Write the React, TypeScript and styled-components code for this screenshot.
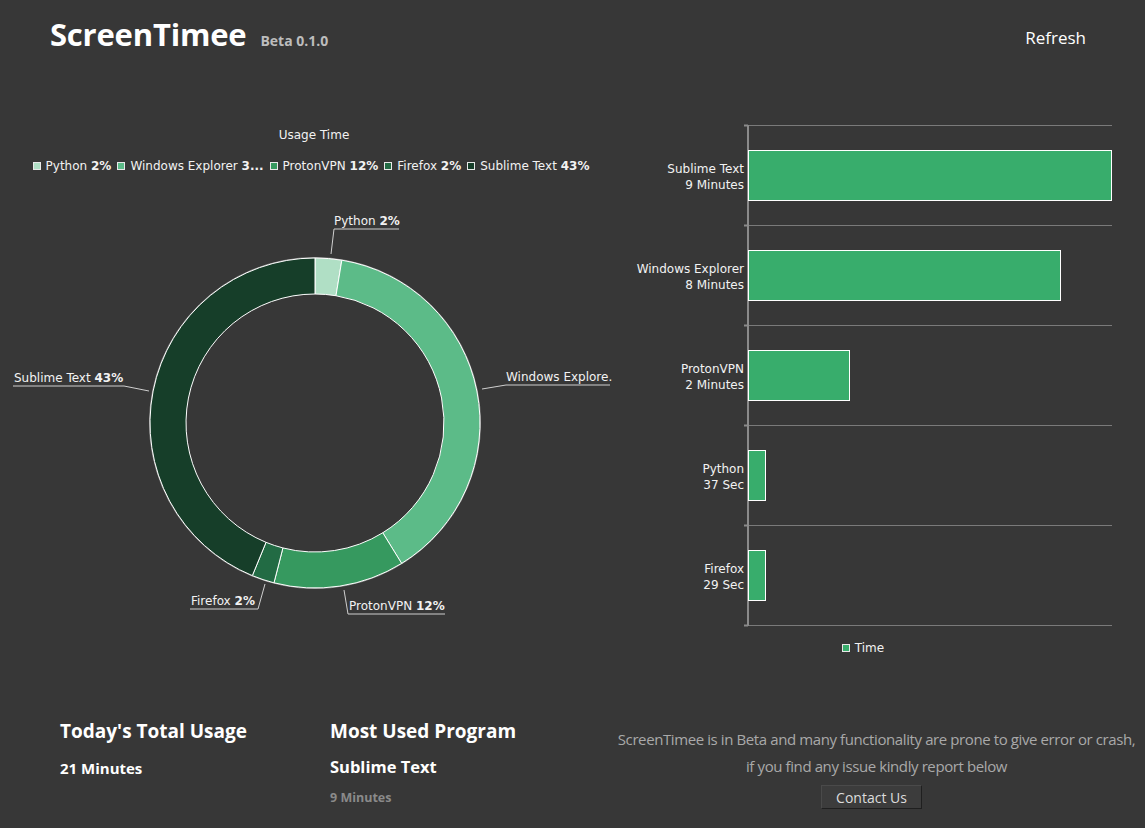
import styled, { createGlobalStyle } from 'styled-components';

const GlobalStyle = createGlobalStyle`
  html, body {
    margin: 0;
    padding: 0;
    background: #373737;
  }
  body {
    font-family: "Open Sans", "Noto Sans", sans-serif;
    color: #ffffff;
  }
`;

const chartFont = '"DejaVu Sans", "Liberation Sans", sans-serif';

type Slice = { name: string; value: number; color: string; legend: string; legendBold?: string };

const slices: Slice[] = [
  { name: 'Python', value: 2.6, color: '#b0dfc5', legend: 'Python', legendBold: '2%' },
  { name: 'Windows Explorer', value: 38.6, color: '#5cbb88', legend: 'Windows Explorer', legendBold: '3...' },
  { name: 'ProtonVPN', value: 12.8, color: '#36995f', legend: 'ProtonVPN', legendBold: '12%' },
  { name: 'Firefox', value: 2.2, color: '#226b44', legend: 'Firefox', legendBold: '2%' },
  { name: 'Sublime Text', value: 43.8, color: '#163e29', legend: 'Sublime Text', legendBold: '43%' },
];

type PieLabel = { text: string; bold?: string; x: number; y: number; line: string };

const pieLabels: PieLabel[] = [
  { text: 'Python ', bold: '2%', x: 334, y: 224, line: '331,253 334,228 399,228' },
  { text: 'Windows Explore.', x: 506, y: 380, line: '482,388 506,384 610,384' },
  { text: 'ProtonVPN ', bold: '12%', x: 349, y: 609, line: '344,589 348,613 445,613' },
  { text: 'Firefox ', bold: '2%', x: 191, y: 604, line: '265,583 258,608 190,608' },
  { text: 'Sublime Text ', bold: '43%', x: 14, y: 381, line: '149,390 124,385 13,385' },
];

type Bar = { name: string; time: string; width: number };

const bars: Bar[] = [
  { name: 'Sublime Text', time: '9 Minutes', width: 363 },
  { name: 'Windows Explorer', time: '8 Minutes', width: 312 },
  { name: 'ProtonVPN', time: '2 Minutes', width: 101 },
  { name: 'Python', time: '37 Sec', width: 17 },
  { name: 'Firefox', time: '29 Sec', width: 17 },
];

const CX = 315;
const CY = 422;
const R_OUT = 165;
const R_IN = 129;

function point(r: number, deg: number) {
  const a = (deg * Math.PI) / 180;
  return `${(CX + r * Math.sin(a)).toFixed(2)} ${(CY - r * Math.cos(a)).toFixed(2)}`;
}

function arcPath(a0: number, a1: number) {
  const large = a1 - a0 > 180 ? 1 : 0;
  return [
    `M ${point(R_OUT, a0)}`,
    `A ${R_OUT} ${R_OUT} 0 ${large} 1 ${point(R_OUT, a1)}`,
    `L ${point(R_IN, a1)}`,
    `A ${R_IN} ${R_IN} 0 ${large} 0 ${point(R_IN, a0)}`,
    'Z',
  ].join(' ');
}

const Page = styled.div`
  width: 1145px;
  height: 828px;
  overflow: hidden;
  display: flex;
  flex-direction: column;
`;

const Header = styled.header`
  display: flex;
  align-items: baseline;
  padding: 14px 59px 0 50px;
  height: 62px;
  box-sizing: border-box;
`;

const Title = styled.h1`
  margin: 0;
  font-size: 31px;
  font-weight: 700;
  line-height: 40px;
  letter-spacing: -0.2px;
`;

const Version = styled.span`
  margin-left: 14px;
  font-size: 14px;
  font-weight: 700;
  color: #bdbdbd;
`;

const RefreshButton = styled.button`
  margin-left: auto;
  position: relative;
  top: -2px;
  background: none;
  border: none;
  padding: 0;
  color: #ffffff;
  font-family: "Open Sans", sans-serif;
  font-size: 17px;
  cursor: pointer;
`;

const Main = styled.main`
  display: flex;
  margin-top: 58px;
`;

const PieColumn = styled.section`
  width: 620px;
  display: flex;
  flex-direction: column;
  align-items: center;
`;

const ChartTitle = styled.div`
  font-family: ${chartFont};
  font-size: 12px;
  line-height: 16px;
  margin-top: 7px;
  padding-left: 8px;
  color: #f2f2f2;
`;

const LegendRow = styled.ul`
  display: flex;
  gap: 6px;
  list-style: none;
  margin: 15px 0 0;
  padding: 0 0 0 2px;
  font-family: ${chartFont};
  font-size: 12px;
  line-height: 16px;
  color: #f2f2f2;
`;

const LegendItem = styled.li`
  display: flex;
  align-items: center;
  gap: 5px;
  white-space: nowrap;
  b {
    font-weight: 700;
  }
`;

const Swatch = styled.span<{ $color: string }>`
  display: inline-block;
  width: 6px;
  height: 6px;
  background: ${(p) => p.$color};
  border: 1px solid #e8e8e8;
`;

const Donut = styled.svg`
  display: block;
  margin-top: 17px;
  font-family: ${chartFont};
  font-size: 12px;
`;

const BarColumn = styled.section`
  width: 500px;
  display: flex;
  flex-direction: column;
`;

const BarSvg = styled.svg`
  display: block;
  font-family: ${chartFont};
  font-size: 12px;
`;

const TimeLegend = styled.div`
  display: flex;
  align-items: center;
  justify-content: center;
  gap: 5px;
  padding-right: 14px;
  margin-top: -1px;
  font-family: ${chartFont};
  font-size: 12px;
  line-height: 16px;
  color: #f2f2f2;
`;

const Footer = styled.footer`
  display: flex;
  margin-top: 62px;
`;

const Stat = styled.div<{ $width: number; $indent: number }>`
  width: ${(p) => p.$width}px;
  padding-left: ${(p) => p.$indent}px;
  box-sizing: border-box;
`;

const StatHeading = styled.h2`
  margin: 0;
  font-size: 19px;
  font-weight: 700;
  line-height: 26px;
`;

const StatValue = styled.div<{ $size: number; $gap: number }>`
  margin-top: ${(p) => p.$gap}px;
  font-size: ${(p) => p.$size}px;
  font-weight: 700;
  line-height: 22px;
`;

const StatSub = styled.div`
  margin-top: 11px;
  font-size: 12.5px;
  font-weight: 700;
  color: #8a8a8a;
`;

const Notice = styled.div`
  flex: 1;
  display: flex;
  flex-direction: column;
  align-items: center;
  padding-top: 8px;
`;

const NoticeText = styled.p`
  margin: 0;
  padding-left: 8px;
  font-size: 15px;
  line-height: 27px;
  color: #a9a9a9;
  text-align: center;
  letter-spacing: -0.4px;
  white-space: nowrap;
`;

const ContactButton = styled.button`
  margin-top: 5px;
  margin-right: 2px;
  width: 101px;
  height: 24px;
  background: #3c3c3c;
  border: 1px solid #1f1f1f;
  border-top-color: #4a4a4a;
  border-left-color: #4a4a4a;
  color: #dcdcdc;
  font-family: "Open Sans", sans-serif;
  font-size: 14px;
  padding: 0;
  cursor: pointer;
`;

function DonutChart() {
  const total = slices.reduce((s, x) => s + x.value, 0);
  let angle = 0;
  const paths = slices.map((s) => {
    const a0 = angle;
    const a1 = angle + (s.value / total) * 360;
    angle = a1;
    return <path key={s.name} d={arcPath(a0, a1)} fill={s.color} stroke="#ffffff" strokeWidth={1} />;
  });
  return (
    <Donut width={620} height={440} viewBox="0 190 620 440">
      <circle cx={CX} cy={CY} r={R_OUT + 0.5} fill="none" stroke="#8c8c8c" strokeWidth={1} />
      {paths}
      {pieLabels.map((l) => (
        <g key={l.text}>
          <polyline points={l.line} fill="none" stroke="#cfcfcf" strokeWidth={1} />
          <text x={l.x} y={l.y} fill="#f2f2f2">
            {l.text}
            {l.bold && <tspan fontWeight={700}>{l.bold}</tspan>}
          </text>
        </g>
      ))}
    </Donut>
  );
}

function BarChart() {
  const axisX = 748;
  const top = 125;
  const band = 100;
  const right = 1112;
  const lines = [0, 1, 2, 3, 4, 5].map((i) => top + i * band);
  return (
    <BarSvg width={500} height={521} viewBox="620 120 500 521">
      {lines.map((y) => (
        <g key={y}>
          <line x1={axisX} y1={y + 0.5} x2={right} y2={y + 0.5} stroke="#7a7a7a" strokeWidth={1} />
          <line x1={744} y1={y + 0.5} x2={axisX} y2={y + 0.5} stroke="#8a8a8a" strokeWidth={2} />
        </g>
      ))}
      <line x1={axisX} y1={top} x2={axisX} y2={top + 5 * band + 1} stroke="#8a8a8a" strokeWidth={2} />
      {bars.map((b, i) => {
        const y = top + i * band + 25;
        return (
          <g key={b.name}>
            <rect x={axisX + 0.5} y={y + 0.5} width={b.width} height={50} fill="#38ad6c" stroke="#ffffff" strokeWidth={1} />
            <text x={744} y={y + 23} textAnchor="end" fill="#f2f2f2">{b.name}</text>
            <text x={744} y={y + 39} textAnchor="end" fill="#f2f2f2">{b.time}</text>
          </g>
        );
      })}
    </BarSvg>
  );
}

export default function App() {
  return (
    <>
      <GlobalStyle />
      <Page>
        <Header>
          <Title>ScreenTimee</Title>
          <Version>Beta 0.1.0</Version>
          <RefreshButton>Refresh</RefreshButton>
        </Header>
        <Main>
          <PieColumn>
            <ChartTitle>Usage Time</ChartTitle>
            <LegendRow>
              {slices.map((s) => (
                <LegendItem key={s.name}>
                  <Swatch $color={s.color} />
                  <span>
                    {s.legend} <b>{s.legendBold}</b>
                  </span>
                </LegendItem>
              ))}
            </LegendRow>
            <DonutChart />
          </PieColumn>
          <BarColumn>
            <BarChart />
            <TimeLegend>
              <Swatch $color="#38ad6c" />
              <span>Time</span>
            </TimeLegend>
          </BarColumn>
        </Main>
        <Footer>
          <Stat $width={330} $indent={60}>
            <StatHeading>Today's Total Usage</StatHeading>
            <StatValue $size={15} $gap={13}>21 Minutes</StatValue>
          </Stat>
          <Stat $width={270} $indent={0}>
            <StatHeading>Most Used Program</StatHeading>
            <StatValue $size={16.5} $gap={12}>Sublime Text</StatValue>
            <StatSub>9 Minutes</StatSub>
          </Stat>
          <Notice>
            <NoticeText>
              ScreenTimee is in Beta and many functionality are prone to give error or crash,
              <br />
              if you find any issue kindly report below
            </NoticeText>
            <ContactButton>Contact Us</ContactButton>
          </Notice>
        </Footer>
      </Page>
    </>
  );
}
